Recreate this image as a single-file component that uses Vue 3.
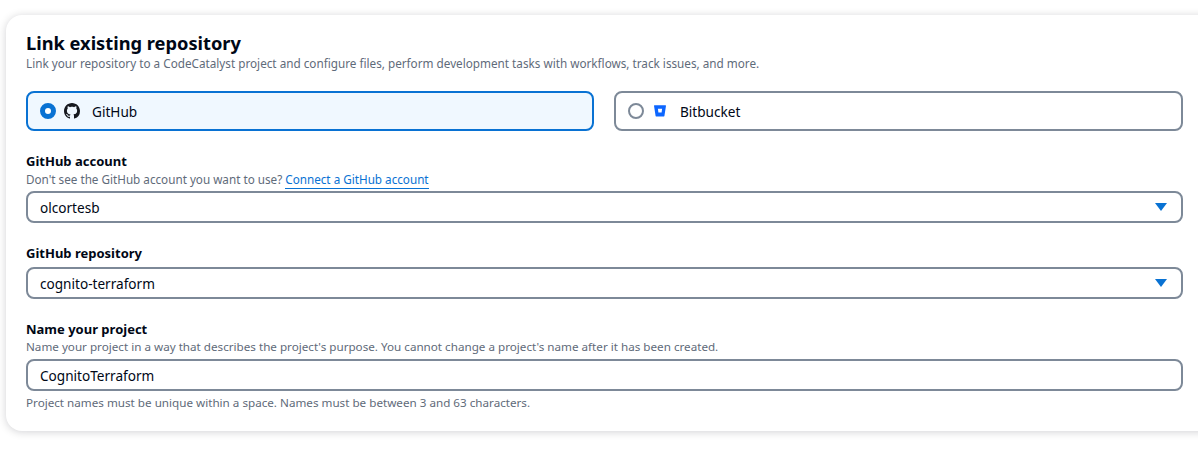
<script setup>
const tiles = [
  { name: 'GitHub', active: true },
  { name: 'Bitbucket', active: false },
]
</script>

<template>
  <div class="page">
    <section class="card">
      <h1 class="title">Link existing repository</h1>
      <p class="hint">Link your repository to a CodeCatalyst project and configure files, perform development tasks with workflows, track issues, and more.</p>

      <div class="tiles">
        <div v-for="t in tiles" :key="t.name" class="tile" :class="{ active: t.active }">
          <span class="radio"></span>
          <svg v-if="t.active" class="icon" viewBox="0 0 16 16" width="16" height="16">
            <path fill="#16191f" d="M8 0C3.58 0 0 3.58 0 8c0 3.54 2.29 6.53 5.47 7.59.4.07.55-.17.55-.38 0-.19-.01-.82-.01-1.49-2.01.37-2.53-.49-2.69-.94-.09-.23-.48-.94-.82-1.13-.28-.15-.68-.52-.01-.53.63-.01 1.08.58 1.23.82.72 1.21 1.87.87 2.33.66.07-.52.28-.87.51-1.07-1.78-.2-3.64-.89-3.64-3.95 0-.87.31-1.59.82-2.15-.08-.2-.36-1.02.08-2.12 0 0 .67-.21 2.2.82.64-.18 1.32-.27 2-.27s1.36.09 2 .27c1.53-1.04 2.2-.82 2.2-.82.44 1.1.16 1.92.08 2.12.51.56.82 1.27.82 2.15 0 3.07-1.87 3.75-3.65 3.95.29.25.54.73.54 1.48 0 1.07-.01 1.93-.01 2.2 0 .21.15.46.55.38A8.01 8.01 0 0 0 16 8c0-4.42-3.58-8-8-8z"/>
          </svg>
          <svg v-else class="icon" viewBox="0 0 16 16" width="16" height="16">
            <path fill="#0c66ff" fill-rule="evenodd" d="M2.4 2.2h11.2a.4.4 0 0 1 .4.46l-1.6 10.4a.5.5 0 0 1-.5.44H4.1a.5.5 0 0 1-.5-.44L2 2.66a.4.4 0 0 1 .4-.46zM5.9 5.8l.5 3.8h3.2l.5-3.8z"/>
          </svg>
          <span class="tile-name">{{ t.name }}</span>
        </div>
      </div>

      <div class="field">
        <div class="label">GitHub account</div>
        <div class="hint account">Don't see the GitHub account you want to use? <a class="link">Connect a GitHub account</a></div>
        <div class="control">
          <span>olcortesb</span>
          <span class="caret"></span>
        </div>
      </div>

      <div class="field">
        <div class="label">GitHub repository</div>
        <div class="control">
          <span>cognito-terraform</span>
          <span class="caret"></span>
        </div>
      </div>

      <div class="field">
        <div class="label">Name your project</div>
        <div class="hint tight">Name your project in a way that describes the project's purpose. You cannot change a project's name after it has been created.</div>
        <div class="control"><span>CognitoTerraform</span></div>
        <div class="hint tight foot">Project names must be unique within a space. Names must be between 3 and 63 characters.</div>
      </div>
    </section>
  </div>
</template>

<style>
html, body { margin: 0; background: #fff; overflow: hidden; }
</style>

<style scoped>
.page {
  width: 1198px;
  height: 456px;
  padding: 15px 0 0 6px;
  box-sizing: border-box;
  overflow: hidden;
  font-family: "Noto Sans", "Open Sans", sans-serif;
  color: #000716;
}
.card {
  width: 1260px;
  height: 416px;
  box-sizing: border-box;
  padding: 16px 0 0 20px;
  background: #fff;
  border-radius: 16px;
  box-shadow: 0 1px 8px rgba(0, 7, 22, 0.18);
}
.title {
  margin: 0;
  font-size: 18.25px;
  line-height: 24px;
  font-weight: 700;
}
.hint {
  margin: 0;
  font-size: 11.73px;
  line-height: 16px;
  color: #5f6b7a;
}
.hint.account { font-size: 11.7px; }
.hint.tight { font-size: 11.66px; }
.tiles {
  display: grid;
  grid-template-columns: 568px 569px;
  gap: 20px;
  margin-top: 20px;
}
.tile {
  height: 40px;
  display: flex;
  align-items: center;
  box-sizing: border-box;
  padding-left: 12px;
  border: 2px solid #7d8998;
  border-radius: 8px;
  font-size: 13.6px;
}
.tile.active {
  border-color: #0972d3;
  background: #f0f8ff;
}
.radio {
  width: 16px;
  height: 16px;
  box-sizing: border-box;
  border: 2px solid #7d8998;
  border-radius: 50%;
}
.active .radio {
  border: 5px solid #0972d3;
  background: #fff;
}
.icon { margin-left: 8px; }
.tile-name { margin-left: 12px; }
.field {
  width: 1157px;
  margin-top: 21px;
  display: flex;
  flex-direction: column;
}
.label {
  margin-bottom: 1px;
  font-size: 13px;
  line-height: 18px;
  font-weight: 700;
}
.link {
  color: #0972d3;
  border-bottom: 1px solid #0972d3;
  padding-bottom: 1px;
}
.control {
  height: 32px;
  margin-top: 4px;
  box-sizing: border-box;
  padding: 0 14px 0 12px;
  border: 2px solid #7d8998;
  border-radius: 8px;
  display: flex;
  align-items: center;
  justify-content: space-between;
  font-size: 13.6px;
  background: #fff;
}
.caret {
  width: 0;
  height: 0;
  border-left: 6px solid transparent;
  border-right: 6px solid transparent;
  border-top: 8px solid #0972d3;
}
.foot { margin-top: 4px; }
</style>
